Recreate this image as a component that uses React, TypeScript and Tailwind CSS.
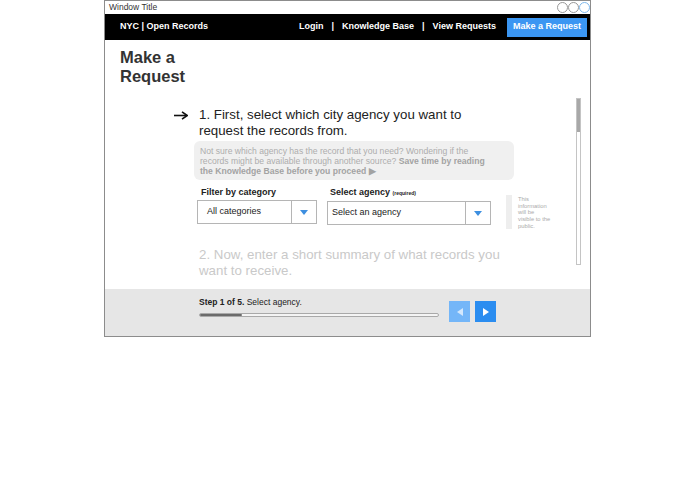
import React from "react";

function Caret({ color = "#3d8fe0" }: { color?: string }) {
  return (
    <svg width="8" height="5" viewBox="0 0 8 5">
      <path d="M0 0 L8 0 L4 5 Z" fill={color} />
    </svg>
  );
}

function SelectBox({ label, width, pad }: { label: string; width: string; pad: string }) {
  return (
    <div className={`flex h-[24px] ${width} border border-[#b5b5b5] bg-white`}>
      <div className={`flex flex-1 items-center ${pad} text-[9px] text-[#222]`}>{label}</div>
      <div className="flex w-[25px] items-center justify-center border-l border-[#b5b5b5]">
        <Caret />
      </div>
    </div>
  );
}

export default function App() {
  return (
    <div
      className="h-[494px] w-[695px] bg-white"
      style={{ fontFamily: '"Liberation Sans", Arial, sans-serif' }}
    >
      <div className="ml-[104px] flex h-[337px] w-[487px] flex-col border border-[#8c8c8c]">
        {/* title bar */}
        <div className="flex h-[13px] items-center justify-between pl-[4px]">
          <span className="text-[8.5px] leading-none text-[#333]">Window Title</span>
          <div className="flex">
            <span className="h-[11px] w-[11px] rounded-full border border-[#999]" />
            <span className="h-[11px] w-[11px] rounded-full border border-[#999]" />
            <span className="h-[11px] w-[11px] rounded-full border border-[#7fb9ec]" />
          </div>
        </div>

        {/* nav */}
        <div className="flex h-[26px] items-center bg-black pl-[15px] pr-[3px] text-[9px] font-bold text-white">
          <span>NYC | Open Records</span>
          <div className="ml-auto flex items-center gap-[8px]">
            <span>Login</span>
            <span>|</span>
            <span>Knowledge Base</span>
            <span>|</span>
            <span>View Requests</span>
          </div>
          <div className="ml-[11px] flex h-[19px] items-center bg-[#3b96f2] px-[6px]">Make a Request</div>
        </div>

        {/* content */}
        <div className="flex flex-1 overflow-hidden">
          <div className="flex-1 pl-[15px] pt-[8px]">
            <h1 className="w-[80px] text-[16.5px] font-bold leading-[19px] text-[#333]">Make a Request</h1>

            <div className="mt-[21px] ml-[54px] flex text-[13.3px] leading-[16px] text-[#222]">
              <span className="flex h-[16px] w-[25px] items-center">
                <svg width="14" height="9" viewBox="0 0 14 9">
                  <path d="M0 4.5 H12" stroke="#111" strokeWidth="1.6" />
                  <path d="M8 0.8 L13.2 4.5 L8 8.2" stroke="#111" strokeWidth="1.6" fill="none" />
                </svg>
              </span>
              <span>
                1. First, select which city agency you want to
                <br />
                request the records from.
              </span>
            </div>

            <div className="ml-[74px] mt-[2px] w-[320px] rounded-[6px] bg-[#f0f0f0] px-[6px] pb-[4px] pt-[5px] text-[8.6px] leading-[10px] text-[#adadad]">
              Not sure which agency has the record that you need? Wondering if the
              <br />
              records might be available through another source?{" "}
              <b className="text-[#a3a3a3]">Save time by reading</b>
              <br />
              <b className="text-[#a3a3a3]">the Knowledge Base before you proceed ▶</b>
            </div>

            <div className="ml-[77px] mt-[7px] flex items-start">
              <div className="w-[120px]">
                <div className="pl-[4px] text-[9px] font-bold leading-[10px] text-[#222]">Filter by category</div>
                <div className="mt-[3px]">
                  <SelectBox label="All categories" width="w-[120px]" pad="pl-[9px]" />
                </div>
              </div>
              <div className="ml-[10px] w-[164px]">
                <div className="pl-[3px] text-[9px] font-bold leading-[10px] text-[#222]">
                  Select agency <span className="text-[5px] font-bold">(required)</span>
                </div>
                <div className="mt-[3px]">
                  <SelectBox label="Select an agency" width="w-[164px]" pad="pl-[4px]" />
                </div>
              </div>
              <div className="ml-[15px] mt-[8px] flex h-[34px]">
                <div className="w-[6px] bg-[#eeeeee]" />
                <div className="ml-[6px] w-[40px] pt-[1px] text-[5.8px] leading-[6.7px] text-[#aaa]">
                  This
                  <br />
                  information
                  <br />
                  will be
                  <br />
                  visible to the
                  <br />
                  public.
                </div>
              </div>
            </div>

            <div className="ml-[79px] mt-[18px] text-[13.3px] leading-[16px] text-[#c9c9c9]">
              2. Now, enter a short summary of what records you
              <br />
              want to receive.
            </div>
          </div>

          {/* scrollbar */}
          <div className="mr-[9px] mt-[58px] flex h-[167px] w-[5px] flex-col border border-[#c4c4c4] bg-white">
            <div className="h-[33px] bg-[#a8a8a8]" />
          </div>
        </div>

        {/* footer */}
        <div className="flex h-[47px] items-start bg-[#e6e6e6] pl-[94px]">
          <div className="w-[240px] pt-[7px]">
            <div className="text-[8.5px] leading-[12px] text-[#222]">
              <b>Step 1 of 5.</b> Select agency.
            </div>
            <div className="mt-[5px] flex h-[4px] w-[240px] rounded-full border border-[#a9a9a9] bg-[#f4f4f4]">
              <div className="h-full w-[42px] rounded-full bg-[#6b6b6b]" />
            </div>
          </div>
          <div className="ml-[10px] mt-[12px] flex gap-[5px]">
            <div className="flex h-[21px] w-[21px] items-center justify-center bg-[#74b6f8]">
              <svg width="6" height="8" viewBox="0 0 6 8">
                <path d="M6 0 L6 8 L0 4 Z" fill="#d3e8fd" />
              </svg>
            </div>
            <div className="flex h-[21px] w-[21px] items-center justify-center bg-[#2b8df0]">
              <svg width="6" height="8" viewBox="0 0 6 8">
                <path d="M0 0 L6 4 L0 8 Z" fill="#ffffff" />
              </svg>
            </div>
          </div>
        </div>
      </div>
    </div>
  );
}
